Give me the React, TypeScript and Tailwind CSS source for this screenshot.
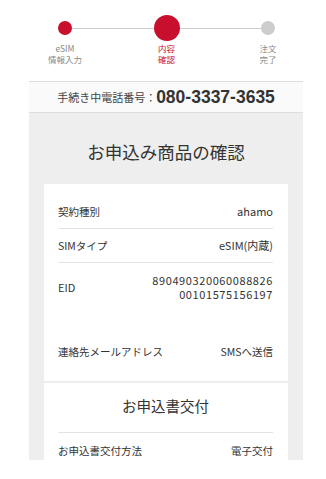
import React from "react";

const font = { fontFamily: '"Noto Sans CJK JP", "Noto Sans", sans-serif' };

function Step({ label1, label2, state }: { label1: string; label2: string; state: "done" | "current" | "todo" }) {
  const dot =
    state === "current"
      ? "w-[26px] h-[26px] bg-[#c8102e]"
      : state === "done"
      ? "w-[14px] h-[14px] bg-[#c8102e]"
      : "w-[14px] h-[14px] bg-[#cccccc]";
  const text = state === "current" ? "text-[#c8102e]" : "text-[#8a8a8a]";
  return (
    <div className="w-[60px] flex flex-col items-center">
      <div className="h-[26px] flex items-center justify-center">
        <div className={`rounded-full ${dot}`} />
      </div>
      <div className={`mt-[2px] text-[8.5px] leading-[11px] text-center ${text}`}>
        <div>{label1}</div>
        <div>{label2}</div>
      </div>
    </div>
  );
}

export default function App() {
  return (
    <div className="w-[326px] h-[479px] bg-white overflow-hidden text-[#333333]" style={font}>
      {/* steps */}
      <div className="relative h-[81px] pt-[15px] pl-[35px] pr-[28px] flex justify-between items-start">
        <div className="absolute left-[65px] right-[58px] top-[28px] h-px bg-[#cccccc]" />
        <div className="relative z-10"><Step label1="eSIM" label2="情報入力" state="done" /></div>
        <div className="relative z-10"><Step label1="内容" label2="確認" state="current" /></div>
        <div className="relative z-10"><Step label1="注文" label2="完了" state="todo" /></div>
      </div>

      {/* phone bar */}
      <div className="ml-[29px] mr-[23px] h-[32px] border-t border-b border-[#dddddd] bg-[#fafafa] flex items-center justify-center">
        <span className="text-[11px] text-[#444444]">手続き中電話番号：</span>
        <span className="text-[17.5px] font-bold text-[#333333]" style={{ fontFamily: '"Liberation Sans", Arial, sans-serif' }}>
          080-3337-3635
        </span>
      </div>

      {/* gray area */}
      <div className="ml-[29px] mr-[23px] h-[347px] bg-[#eeeeee] px-[15px] overflow-hidden">
        <div className="h-[71px] pt-[7px] flex items-center justify-center">
          <h1 className="text-[17.5px] text-[#333333] leading-none">お申込み商品の確認</h1>
        </div>

        {/* card 1 */}
        <div className="bg-white pt-[11px] pl-[14px] pr-[15px] pb-[22px] text-[10.5px]">
          <div className="h-[34px] border-b border-[#e3e3e3] flex items-center justify-between">
            <span>契約種別</span>
            <span className="text-[11px]">ahamo</span>
          </div>
          <div className="h-[34px] border-b border-[#e3e3e3] flex items-center justify-between">
            <span>SIMタイプ</span>
            <span className="text-[11px]">eSIM(内蔵)</span>
          </div>
          <div className="py-[10px] flex items-center justify-between">
            <span className="text-[11px] leading-[14px]">EID</span>
            <div className="text-right text-[11px] leading-[14px] tracking-[0.6px]">
              <div>890490320060088826</div>
              <div>00101575156197</div>
            </div>
          </div>
          <div className="mt-[34px] h-[14px] flex items-center justify-between">
            <span>連絡先メールアドレス</span>
            <span>SMSへ送信</span>
          </div>
        </div>

        <div className="h-[2px]" />

        {/* card 2 */}
        <div className="bg-white h-[80px] pl-[14px] pr-[15px] overflow-hidden">
          <div className="pt-[13px] pb-[16px] border-b border-[#e3e3e3] text-center">
            <div className="text-[14.5px] leading-[20px]">お申込書交付</div>
          </div>
          <div className="pt-[11px] h-[14px] flex items-center justify-between text-[10.5px] leading-[14px] box-content">
            <span>お申込書交付方法</span>
            <span>電子交付</span>
          </div>
        </div>
      </div>
    </div>
  );
}
